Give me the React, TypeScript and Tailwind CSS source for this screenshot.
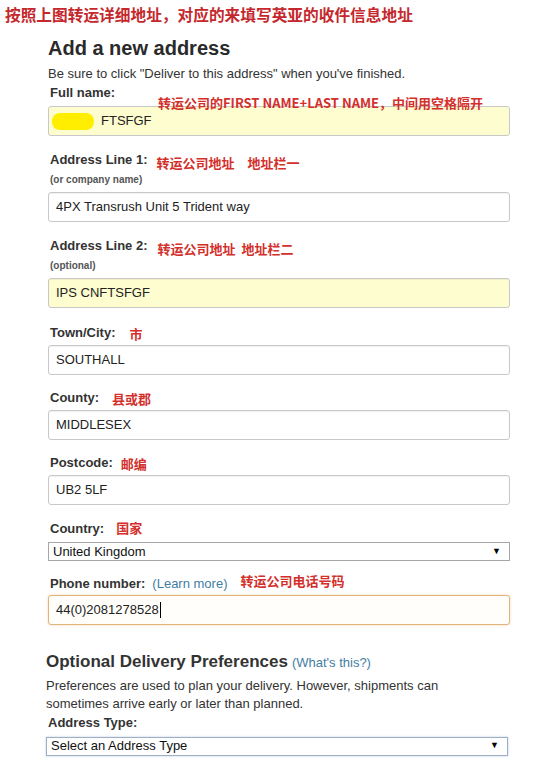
import React from "react";

// --- annotation text (red, Chinese) ---
const Note: React.FC<{ children: React.ReactNode; className?: string }> = ({
  children,
  className = "",
}) => (
  <span
    className={`text-[13px] font-bold text-[#d3302c] leading-none ${className}`}
    style={{ fontFamily: '"Noto Sans CJK SC", "Liberation Sans", sans-serif' }}
  >
    {children}
  </span>
);

interface FieldProps {
  label: string;
  hint?: string;
  value: string;
  yellow?: boolean;
  note?: React.ReactNode;
  className?: string;
}

const TextField: React.FC<FieldProps> = ({
  label,
  hint,
  value,
  yellow,
  note,
  className = "",
}) => (
  <div className={className}>
    <div className="flex items-center h-4 pl-[2px]">
      <span className="text-[13px] font-bold text-[#333]">{label}</span>
      {note}
    </div>
    {hint && (
      <div className="text-[10px] font-bold text-[#555] pl-[2px] mt-[6px] leading-3">
        {hint}
      </div>
    )}
    <div
      className={`h-[30px] ${hint ? "mt-[6px]" : "mt-[4px]"} rounded-[3px] border border-[#c8c8c8] flex items-center px-[7px] text-[13px] text-[#222] shadow-[inset_0_1px_1px_rgba(0,0,0,0.06)] ${
        yellow ? "bg-[#fdfdcf]" : "bg-white"
      }`}
    >
      {value}
    </div>
  </div>
);

const SelectBox: React.FC<{ value: string; blue?: boolean }> = ({ value, blue }) => (
  <div
    className={`h-[19px] flex items-center justify-between pl-[4px] pr-[8px] text-[13px] text-[#111] bg-white border ${
      blue ? "border-[#9fb0c6] shadow-[0_0_2px_rgba(120,150,190,0.5)]" : "border-[#a6a6a6]"
    }`}
  >
    <span>{value}</span>
    <span className="text-[9px] text-black">▼</span>
  </div>
);

const App: React.FC = () => {
  return (
    <div
      className="w-[534px] h-[765px] bg-white overflow-hidden relative"
      style={{ fontFamily: '"Liberation Sans", Arial, sans-serif' }}
    >
      {/* 顶部说明 */}
      <div
        className="pl-[5px] pt-[5px] h-[28px] text-[15.7px] font-bold text-[#c4282c] leading-5"
        style={{ fontFamily: '"Noto Sans CJK SC", sans-serif' }}
      >
        按照上图转运详细地址，对应的来填写英亚的收件信息地址
      </div>

      <div className="ml-[48px] w-[462px]">
        <h1 className="text-[20px] font-bold text-[#2a2a2a] leading-6 mt-[8px]">
          Add a new address
        </h1>
        <p className="text-[13px] text-[#333] mt-[6px] leading-4">
          Be sure to click "Deliver to this address" when you've finished.
        </p>

        {/* Full name */}
        <div className="relative mt-[3px]">
          <div className="flex items-center h-4 pl-[2px]">
            <span className="text-[13px] font-bold text-[#333]">Full name:</span>
          </div>
          <div className="h-[30px] mt-[5px] rounded-[3px] border border-[#c8c8c8] bg-[#fdfdcf] flex items-center pl-[3px] text-[13px] text-[#222]">
            <span className="w-[42px] h-[17px] rounded-[8px] bg-[#ffee00] mr-[7px]" />
            FTSFGF
          </div>
          <Note className="absolute left-[110px] top-[11px] text-[13.5px]">
            转运公司的FIRST NAME+LAST NAME，中间用空格隔开
          </Note>
        </div>

        <TextField
          className="mt-[16px]"
          label="Address Line 1:"
          hint="(or company name)"
          value="4PX Transrush Unit 5 Trident way"
          note={
            <Note className="ml-[9px] mt-[5px]">
              转运公司地址<span className="ml-[13px]">地址栏一</span>
            </Note>
          }
        />
        <TextField
          className="mt-[16px]"
          label="Address Line 2:"
          hint="(optional)"
          value="IPS CNFTSFGF"
          yellow
          note={
            <Note className="ml-[10px] mt-[5px]">
              转运公司地址<span className="ml-[6px]">地址栏二</span>
            </Note>
          }
        />
        <TextField
          className="mt-[17px]"
          label="Town/City:"
          value="SOUTHALL"
          note={<Note className="ml-[14px]">市</Note>}
        />
        <TextField
          className="mt-[15px]"
          label="County:"
          value="MIDDLESEX"
          note={<Note className="ml-[13px]">县或郡</Note>}
        />
        <TextField
          className="mt-[15px]"
          label="Postcode:"
          value="UB2 5LF"
          note={<Note className="ml-[8px]">邮编</Note>}
        />

        {/* Country */}
        <div className="mt-[16px]">
          <div className="flex items-center h-4 pl-[2px]">
            <span className="text-[13px] font-bold text-[#333]">Country:</span>
            <Note className="ml-[12px] -mt-[4px]">国家</Note>
          </div>
          <div className="mt-[5px]">
            <SelectBox value="United Kingdom" />
          </div>
        </div>

        {/* Phone */}
        <div className="mt-[15px]">
          <div className="flex items-center h-4 pl-[2px]">
            <span className="text-[13px] font-bold text-[#333]">Phone number:</span>
            <span className="ml-[7px] text-[13px] text-[#3f7ea3]">(Learn more)</span>
            <Note className="ml-[13px] -mt-[7px]">转运公司电话号码</Note>
          </div>
          <div className="h-[30px] mt-[3px] rounded-[3px] border border-[#e2b47c] bg-[#fffefa] flex items-center px-[7px] text-[13px] text-[#222] shadow-[0_0_3px_rgba(228,170,100,0.45)]">
            44(0)2081278528
            <span className="w-px h-[16px] bg-black ml-px" />
          </div>
        </div>
      </div>

      {/* Optional Delivery Preferences */}
      <div className="ml-[46px] w-[462px] mt-[24px]">
        <div className="flex items-baseline">
          <h2 className="text-[17px] font-bold text-[#333]">Optional Delivery Preferences</h2>
          <span className="ml-[4px] text-[13px] text-[#3f7ea3]">(What's this?)</span>
        </div>
        <p className="text-[13px] text-[#333] leading-[18px] mt-[2px]">
          Preferences are used to plan your delivery. However, shipments can
          <br />
          sometimes arrive early or later than planned.
        </p>
        <div className="text-[13px] font-bold text-[#333] pl-[2px] leading-4 mt-[2px]">
          Address Type:
        </div>
        <div className="mt-[6px]">
          <SelectBox value="Select an Address Type" blue />
        </div>
      </div>
    </div>
  );
};

export default App;
